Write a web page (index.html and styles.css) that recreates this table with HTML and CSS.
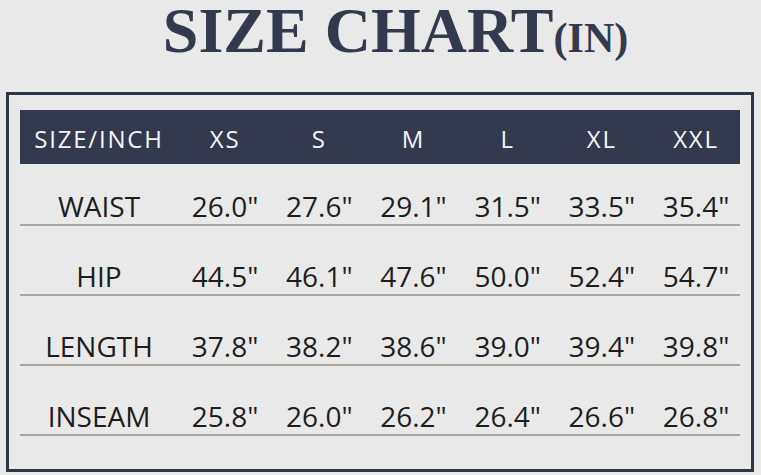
FILE: index.html
```html
<!DOCTYPE html>
<html lang="en">
<head>
<meta charset="utf-8">
<title>Size Chart</title>
<link rel="stylesheet" href="styles.css">
</head>
<body>
<h1 class="title">SIZE CHART<span class="unit">(IN)</span></h1>
<div class="box">
  <div class="row head">
    <div class="cell first">SIZE/INCH</div>
    <div class="cell">XS</div>
    <div class="cell">S</div>
    <div class="cell">M</div>
    <div class="cell">L</div>
    <div class="cell">XL</div>
    <div class="cell">XXL</div>
  </div>
  <div class="row body top">
    <div class="cell first">WAIST</div>
    <div class="cell">26.0"</div>
    <div class="cell">27.6"</div>
    <div class="cell">29.1"</div>
    <div class="cell">31.5"</div>
    <div class="cell">33.5"</div>
    <div class="cell">35.4"</div>
  </div>
  <div class="row body">
    <div class="cell first">HIP</div>
    <div class="cell">44.5"</div>
    <div class="cell">46.1"</div>
    <div class="cell">47.6"</div>
    <div class="cell">50.0"</div>
    <div class="cell">52.4"</div>
    <div class="cell">54.7"</div>
  </div>
  <div class="row body">
    <div class="cell first">LENGTH</div>
    <div class="cell">37.8"</div>
    <div class="cell">38.2"</div>
    <div class="cell">38.6"</div>
    <div class="cell">39.0"</div>
    <div class="cell">39.4"</div>
    <div class="cell">39.8"</div>
  </div>
  <div class="row body">
    <div class="cell first">INSEAM</div>
    <div class="cell">25.8"</div>
    <div class="cell">26.0"</div>
    <div class="cell">26.2"</div>
    <div class="cell">26.4"</div>
    <div class="cell">26.6"</div>
    <div class="cell">26.8"</div>
  </div>
</div>
</body>
</html>
```

FILE: styles.css
```css
html, body {
  margin: 0;
  padding: 0;
  background: #e9e9e9;
}

body {
  width: 761px;
  height: 475px;
  overflow: hidden;
  font-family: "Open Sans", "Liberation Sans", sans-serif;
}

.title {
  margin: 0;
  height: 92px;
  box-sizing: border-box;
  padding: 0 0 0 30px;
  text-align: center;
  font-family: "Liberation Serif", "Times New Roman", serif;
  font-weight: 700;
  font-size: 64px;
  line-height: 61px;
  color: #333a4e;
  white-space: nowrap;
}

.unit {
  font-size: 42px;
}

.box {
  margin-left: 6px;
  width: 748px;
  height: 380px;
  box-sizing: border-box;
  border: 3px solid #2e3547;
  padding: 15px 11px 0 11px;
}

.row {
  display: grid;
  grid-template-columns: 158px repeat(6, 94.2px);
}

.cell {
  text-align: center;
  white-space: nowrap;
}

.head {
  height: 54px;
  background: #333a4e;
  color: #f5f5f5;
  font-size: 24px;
  letter-spacing: 1.8px;
  line-height: 54px;
  padding-top: 2px;
  box-sizing: border-box;
}

.body {
  font-size: 28px;
  line-height: 32px;
  color: #1d1d1d;
  padding: 34px 0 2px;
  border-bottom: 2px solid #aaa69d;
}

.body.top {
  padding-top: 26px;
}
```
